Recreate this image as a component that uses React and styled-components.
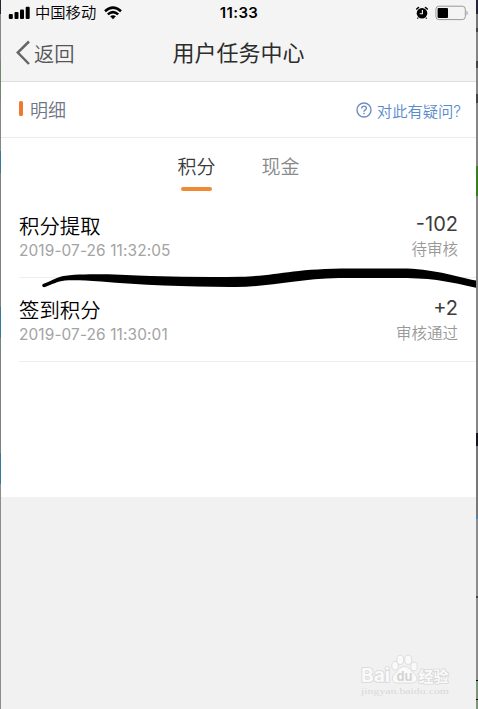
import React from 'react'
import styled, { createGlobalStyle } from "styled-components";

const records = [
  { id: 1, title: '积分提取', time: '2019-07-26 11:32:05', amount: '-102', status: '待审核' },
  { id: 2, title: '签到积分', time: '2019-07-26 11:30:01', amount: '+2', status: '审核通过' },
];

const StatusBar = () => {
  return (
    <StatusWrapper>
      <Carrier>
        <svg width="22" height="14" viewBox="0 0 22 14">
          <rect x="0.8" y="8" width="4" height="5" rx="1" />
          <rect x="6.5" y="6" width="4" height="7" rx="1" />
          <rect x="12" y="3.5" width="4" height="9.5" rx="1" />
          <rect x="17.7" y="0.8" width="4" height="12.2" rx="1" />
        </svg>
        <span>中国移动</span>
        <svg className="wifi" width="18" height="14" viewBox="0 0 18 14" fill="none" stroke="#000" strokeWidth="2.5">
          <path d="M1 5.2 Q9 -2 17 5.2" />
          <path d="M3.8 8.4 Q9 3.9 14.2 8.4" />
          <path d="M6.1 10.3 Q9 8.1 11.9 10.3 L9 13.2 Z" fill="#000" stroke="none" />
        </svg>
      </Carrier>
      <Clock>11:33</Clock>
      <Battery>
        <svg width="14" height="14" viewBox="0 0 14 14">
          <circle cx="7" cy="7.2" r="5.3" />
          <path d="M1.7 3 L3.5 1.5 M12.3 3 L10.5 1.5" stroke="#000" strokeWidth="1.6" strokeLinecap="round" />
          <path d="M3.2 11.6 L2.4 12.6 M10.8 11.6 L11.6 12.6" stroke="#000" strokeWidth="1.1" />
          <path d="M7.4 4 V7.7 H4.7" stroke="#f4f4f4" strokeWidth="1.1" fill="none" />
        </svg>
        <svg width="34" height="16" viewBox="0 0 34 16">
          <rect x="0.9" y="1.2" width="29.4" height="13.4" rx="3" fill="none" stroke="#999" />
          <rect x="2.6" y="3" width="10.4" height="10" rx="1" />
          <path d="M31.6 5.4 Q33.6 8 31.6 10.6 Z" fill="#888" />
        </svg>
      </Battery>
    </StatusWrapper>
  )
}

const Record = ({ title, time, amount, status }) => {
  return (
    <RecordRow>
      <div>
        <RecordTitle>{title}</RecordTitle>
        <RecordTime>{time}</RecordTime>
      </div>
      <RecordResult>
        <Amount>{amount}</Amount>
        <Status>{status}</Status>
      </RecordResult>
    </RecordRow>
  )
}

const Watermark = () => {
  return (
    <WatermarkWrapper>
      <svg width="96" height="48" viewBox="0 0 96 48">
        <g className="logo">
          <text x="1" y="32" fontSize="19" textLength="29" lengthAdjust="spacingAndGlyphs">Bai</text>
          <text x="58.5" y="31.5" fontSize="15" textLength="30" lengthAdjust="spacingAndGlyphs">经验</text>
          <text className="url" x="1" y="44" fontSize="9" textLength="88" lengthAdjust="spacingAndGlyphs">jingyan.baidu.com</text>
        </g>
        <g fill="#fafafa" stroke="#dadada" strokeWidth="0.9">
          <ellipse cx="35" cy="15.7" rx="3.2" ry="4.3" />
          <ellipse cx="40.3" cy="9.8" rx="3.5" ry="4.6" />
          <ellipse cx="48.2" cy="9.8" rx="3.5" ry="4.6" />
          <ellipse cx="54" cy="16.5" rx="3.2" ry="4.3" />
          <path d="M44.5 16.5 C39.5 16.5 38 21.5 34.5 24 C30.5 28 32.5 33 37 33 L51.5 33 C57.5 33 58.5 28 54.5 24 C51 21.5 49.5 16.5 44.5 16.5 Z" />
        </g>
        <g className="logo">
          <text className="du" x="36.5" y="30.5" fontSize="13" textLength="16" lengthAdjust="spacingAndGlyphs">du</text>
        </g>
      </svg>
    </WatermarkWrapper>
  )
}

const App = () => {
  return (
    <Page>
      <GlobalStyle />
      <Screen>
        <Header>
          <StatusBar />
          <NavBar>
            <BackButton>
              <svg width="15" height="26" viewBox="0 0 15 26" fill="none" stroke="#666" strokeWidth="2.5">
                <path d="M14 1.5 L2.8 12.5 L14 24" />
              </svg>
              返回
            </BackButton>
            <NavTitle>用户任务中心</NavTitle>
          </NavBar>
        </Header>
        <Section>
          <SectionTitle>明细</SectionTitle>
          <HelpLink>
            <svg width="16" height="16" viewBox="0 0 16 16" fill="none" stroke="#6f8fc0" strokeWidth="1.4">
              <circle cx="8" cy="8" r="7" />
              <path d="M5.7 6.4 C5.7 3.4 10.4 3.5 10.4 6.2 C10.4 7.8 8 7.9 8 9.7" />
              <path d="M8 10.8 V12.2" />
            </svg>
            对此有疑问?
          </HelpLink>
        </Section>
        <Tabs>
          <Tab $active>积分</Tab>
          <Tab>现金</Tab>
        </Tabs>
        <List>
          {records.map(record => {
            return <Record key={record.id} {...record} />
          })}
        </List>
        <Blank />
        <Marker width="435" height="22" viewBox="0 0 435 22">
          <path d="M2 16 C9 13.5 15 10 21 8.3 C30 6.6 45 6.3 60 6.3 C80 6.3 90 7.5 110 8 C140 9 170 9.2 200 8.8 C238 7.5 250 0.4 310 0.4 L360 0.4 C392 0.4 412 8 435 12.5 L435 19.7 C410 14 392 10 360 10 L298 10 C255 11 228 19 195 19 C150 19.2 100 17 60 13.6 C45 12.6 34 12 24 12.5 C16 13.4 11 16.5 4 19 C1 19.8 0.5 17 2 16 Z" />
        </Marker>
        <Watermark />
      </Screen>
    </Page>
  )
}

export default App;

const GlobalStyle = createGlobalStyle`
  * {
    box-sizing: border-box;
  }
  body {
    margin: 0;
    font-family: Inter, "Noto Sans CJK SC", sans-serif;
  }
`;

/* slivers of the desktop stay visible on both sides of the phone screen */
const Page = styled.div`
  height: 709px;
  padding: 0 2px 0 1px;
  overflow: hidden;
  background:
    linear-gradient(#252432 14px, #858783 14px 60px, #71866a 60px 100px, #858783 100px 151px, #397998 151px 173px, #7c8378 173px 307px, #397998 307px 338px, #7c8378 338px 453px, #397998 453px 484px, #8b8d8c 484px) left / 1px 100% no-repeat,
    linear-gradient(#25243a 14px, #777 14px 28px, #444 28px 32px, #858585 32px 61px, #444 61px 68px, #858585 68px 94px, #444 94px 103px, #858585 103px 166px, #397f20 166px 196px, #858585 196px 433px, #17151e 433px 446px, #777 446px 516px, #4b7fb0 516px 519px, #8b8d8e 519px 596px, #444 596px 598px, #8b8b8b 598px 680px, #000 680px 681px, #7c967b 681px 699px, #000 699px 700px, #7c967b 700px) right / 2px 100% no-repeat;
`;

const Screen = styled.div`
  position: relative;
  height: 100%;
  display: flex;
  flex-direction: column;
  background: #fff;
`;

const Header = styled.header`
  height: 82px;
  background: #f4f4f4;
  border-bottom: 1px solid #dedede;
`;

const StatusWrapper = styled.div`
  height: 26px;
  display: grid;
  grid-template-columns: 1fr auto 1fr;
  align-items: center;
  padding: 0 7px;
  color: #000;
`;

const Carrier = styled.div`
  display: flex;
  align-items: center;
  gap: 5px;
  font-size: 15.3px;
  font-weight: 350;
  line-height: 26px;
  .wifi {
    margin-left: 3px;
  }
`;

const Clock = styled.div`
  padding-left: 1px;
  font-size: 15px;
  font-weight: 600;
  line-height: 24px;
  letter-spacing: 0.4px;
`;

const Battery = styled.div`
  display: flex;
  justify-content: flex-end;
  align-items: center;
  gap: 6px;
  padding-bottom: 1px;
`;

const NavBar = styled.div`
  height: 53px;
  display: grid;
  grid-template-columns: 1fr auto 1fr;
  align-items: center;
  padding: 0 14px;
`;

const BackButton = styled.div`
  display: flex;
  align-items: center;
  gap: 4px;
  font-size: 20.3px;
  font-weight: 350;
  color: #555;
`;

const NavTitle = styled.div`
  padding-bottom: 4px;
  font-size: 22px;
  font-weight: 400;
  color: #2c2c2c;
`;

const Section = styled.div`
  height: 56px;
  display: flex;
  justify-content: space-between;
  align-items: center;
  padding: 0 15px 0 18px;
  border-bottom: 1px solid #ececec;
`;

const SectionTitle = styled.div`
  display: flex;
  align-items: center;
  gap: 7px;
  padding-bottom: 2px;
  font-size: 18px;
  font-weight: 350;
  color: #6e7685;
  &::before {
    content: "";
    width: 4px;
    height: 15px;
    border-radius: 1.5px;
    background: #ee7834;
  }
`;

const HelpLink = styled.div`
  display: flex;
  align-items: center;
  gap: 5px;
  font-size: 15.3px;
  font-weight: 350;
  color: #588bcb;
`;

const Tabs = styled.div`
  height: 63px;
  display: flex;
  justify-content: center;
  gap: 46px;
  padding-top: 15px;
`;

const Tab = styled.div`
  display: flex;
  flex-direction: column;
  align-items: center;
  font-size: 19px;
  font-weight: 350;
  line-height: 30px;
  color: ${props => props.$active ? '#3a3a3a' : '#888'};
  &::after {
    content: "";
    width: 31px;
    height: 4px;
    margin-top: 4px;
    border-radius: 2px;
    background: ${props => props.$active ? '#ef8a35' : 'transparent'};
  }
`;

const List = styled.div`
  height: 296px;
  padding-left: 18px;
`;

const RecordRow = styled.div`
  height: 84px;
  display: flex;
  justify-content: space-between;
  padding: 17px 18px 0 0;
  border-bottom: 1px solid #eee;
  &:first-child {
    height: 77px;
    padding-top: 10px;
  }
`;

const RecordTitle = styled.div`
  padding-top: 1px;
  font-size: 20.4px;
  font-weight: 350;
  line-height: 29px;
  color: #000;
`;

const RecordTime = styled.div`
  font-size: 15.4px;
  line-height: 20px;
  letter-spacing: 0.12px;
  color: #a3a3a3;
`;

const RecordResult = styled.div`
  text-align: right;
`;

const Amount = styled.div`
  font-size: 20px;
  line-height: 26px;
  color: #3c3c3c;
`;

const Status = styled.div`
  padding-top: 2px;
  font-size: 15.5px;
  font-weight: 350;
  line-height: 22px;
  color: #999;
`;

const Blank = styled.div`
  flex: 1;
  background: #f1f1f1;
`;

const Marker = styled.svg`
  position: absolute;
  left: 40px;
  top: 268px;
`;

const WatermarkWrapper = styled.div`
  position: absolute;
  left: 359px;
  top: 650px;
  svg {
    display: block;
  }
  .logo {
    font-family: Inter, "Noto Sans CJK SC", sans-serif;
    font-weight: 700;
    fill: #fafafa;
    stroke: #d8d8d8;
    stroke-width: 1.6px;
    paint-order: stroke;
  }
  .du {
    fill: #d4d4d4;
    stroke: none;
  }
  .url {
    font-family: "Liberation Serif", serif;
    font-weight: 400;
    fill: #d8d8d8;
    stroke: none;
  }
`;
